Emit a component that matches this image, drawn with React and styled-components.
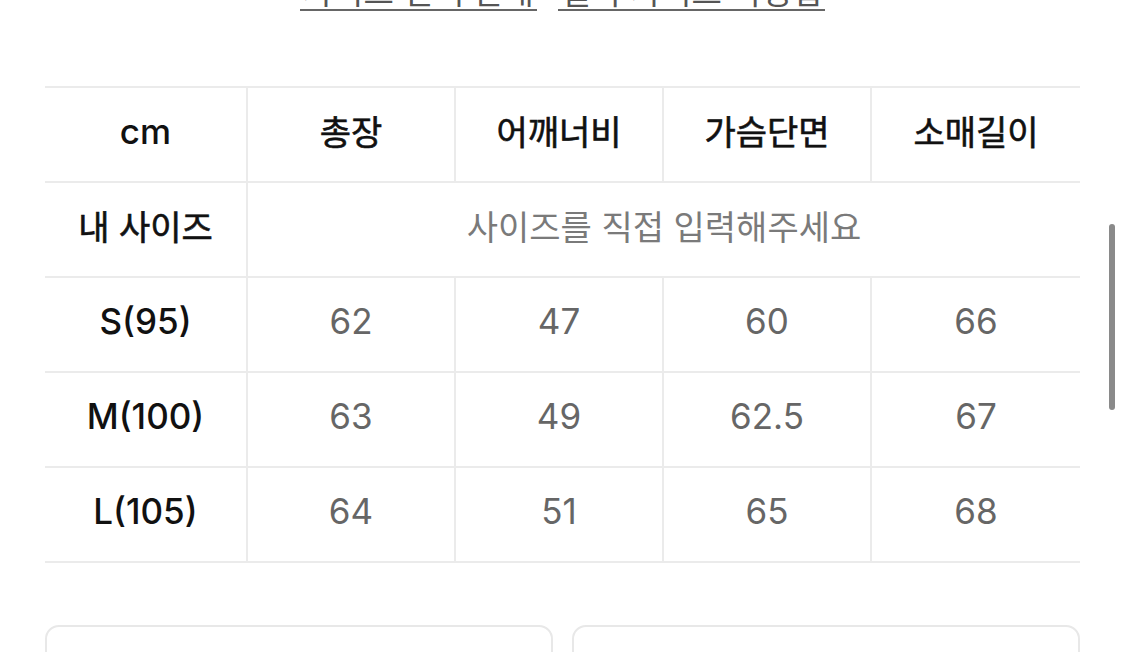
import React from 'react'
import styled, { createGlobalStyle } from 'styled-components'

const GlobalStyle = createGlobalStyle`
    html, body {
        margin: 0;
        padding: 0;
        background: #ffffff;
        overflow: hidden;
    }
    body {
        font-family: "Inter", "Noto Sans CJK KR", sans-serif;
    }
`

const headers = ['총장', '어깨너비', '가슴단면', '소매길이']
const sizes = [
    { label: 'S(95)', values: ['62', '47', '60', '66'] },
    { label: 'M(100)', values: ['63', '49', '62.5', '67'] },
    { label: 'L(105)', values: ['64', '51', '65', '68'] },
]

const App = () => {
    return (
        <>
            <GlobalStyle />
            <Page>
                <LinkRow>
                    <GuideLink href="#">사이즈 선택 안내</GuideLink>
                    <GuideLink href="#">실측 사이즈 측정법</GuideLink>
                </LinkRow>
                <SizeTable>
                    <Cell $head>cm</Cell>
                    {headers.map((h, i) => (
                        <Cell key={h} $head $korean $last={i === headers.length - 1}>{h}</Cell>
                    ))}
                    <Cell $head $korean>내 사이즈</Cell>
                    <Cell $korean $muted $span={4} $last>사이즈를 직접 입력해주세요</Cell>
                    {sizes.map(row => (
                        <React.Fragment key={row.label}>
                            <Cell $head>{row.label}</Cell>
                            {row.values.map((v, i) => (
                                <Cell key={i} $last={i === row.values.length - 1}>{v}</Cell>
                            ))}
                        </React.Fragment>
                    ))}
                </SizeTable>
                <CardRow>
                    <Card />
                    <Card />
                </CardRow>
            </Page>
            <ScrollThumb />
        </>
    )
}

const Page = styled.div`
    padding: 0 45px;
    box-sizing: border-box;
    width: 1125px;
`

const LinkRow = styled.div`
    display: flex;
    justify-content: center;
    gap: 21px;
    margin-top: -24px;
    height: 38px;
`

const GuideLink = styled.a`
    font-size: 33px;
    line-height: 33px;
    color: #555555;
    text-decoration: none;
    border-bottom: 2px solid #666666;
    height: 33px;
    padding: 0 3px;
`

const SizeTable = styled.div`
    display: grid;
    grid-template-columns: 203px repeat(4, 1fr);
    grid-auto-rows: 95px;
    margin-top: 72px;
    border-top: 2px solid #ebebeb;
`

const Cell = styled.div`
    display: flex;
    align-items: center;
    justify-content: center;
    box-sizing: border-box;
    border-bottom: 2px solid #ebebeb;
    border-right: ${p => (p.$last ? 'none' : '2px solid #ebebeb')};
    grid-column: ${p => (p.$span ? `span ${p.$span}` : 'auto')};
    font-size: ${p => (p.$korean ? '34px' : '35px')};
    font-weight: ${p => (p.$head && !p.$korean ? 500 : 400)};
    -webkit-text-stroke: ${p => (p.$head && p.$korean ? '0.6px currentColor' : '0')};
    color: ${p => (p.$head ? '#111111' : p.$muted ? '#7a7a7a' : '#666666')};
    padding-bottom: 8px;
`

const CardRow = styled.div`
    display: grid;
    grid-template-columns: 1fr 1fr;
    gap: 19px;
    margin-top: 62px;
`

const Card = styled.div`
    height: 120px;
    border: 2px solid #e8e8e8;
    border-radius: 14px;
`

const ScrollThumb = styled.div`
    position: fixed;
    top: 224px;
    right: 10px;
    width: 6px;
    height: 186px;
    border-radius: 3px;
    background: #8a8a8a;
`

export default App
